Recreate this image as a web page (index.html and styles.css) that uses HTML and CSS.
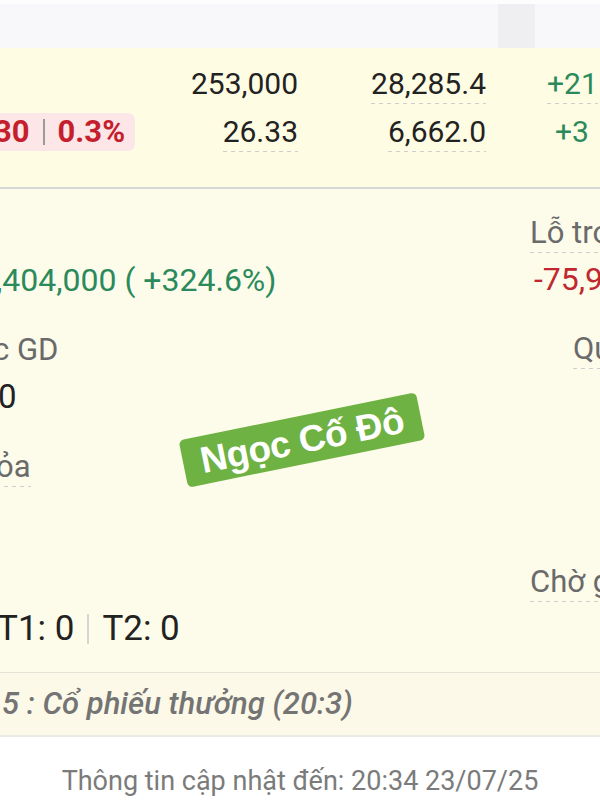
FILE: index.html
```html
<!DOCTYPE html>
<html lang="vi">
<head>
    <meta charset="UTF-8">
    <title>Chi tiết mã</title>
    <link rel="stylesheet" href="styles.css">
</head>
<body>
<div id="page">
    <div id="topbar">
        <div class="strip"></div>
    </div>

    <div id="quote">
        <div class="cell"></div>
        <div class="cell num">253,000</div>
        <div class="cell num"><span class="dash">28,285.4</span></div>
        <div class="cell up"><span class="dash">+21</span></div>

        <div class="cell">
            <span class="badge"><span>30</span><i class="sep"></i><span>0.3%</span></span>
        </div>
        <div class="cell num"><span class="dash">26.33</span></div>
        <div class="cell num"><span class="dash">6,662.0</span></div>
        <div class="cell up second">+3</div>
    </div>

    <div id="detail">
        <div class="col-left">
            <div class="value green first">,404,000 ( +324.6%)</div>
            <div class="label gd">c GD</div>
            <div class="value zero">0</div>
            <div class="label hoa"><span class="dash">ỏa</span></div>
            <div class="value t12">T1: 0<i class="sep light"></i>T2: 0</div>
        </div>
        <div class="col-right">
            <div class="label lo"><span class="dash">Lỗ tro</span></div>
            <div class="value red">-75,9</div>
            <div class="label qu"><span class="dash">Qu</span></div>
            <div class="label cho"><span class="dash">Chờ g</span></div>
        </div>
        <div class="stamp">Ngọc Cố Đô</div>
    </div>

    <div id="note">5 : Cổ phiếu thưởng (20:3)</div>

    <div id="footer">Thông tin cập nhật đến: 20:34 23/07/25</div>
</div>
</body>
</html>
```

FILE: styles.css
```css
*{
    margin: 0;
    padding: 0;
    box-sizing: border-box;
}

body{
    width: 600px;
    height: 800px;
    overflow: hidden;
    background: #fff;
    font-family: Roboto, "Noto Sans", "Liberation Sans", sans-serif;
    color: #222;
}

#page{
    width: 600px;
}

/* thanh trên cùng */
#topbar{
    height: 48px;
    background: #f8f8fa;
    border-top: 4px solid #fdfdfe;
    display: flex;
}
#topbar .strip{
    width: 37px;
    margin-left: 498px;
    background: #efeff2;
}

/* khối giá */
#quote{
    height: 139px;
    background: #fffce4;
    padding-top: 18px;
    display: grid;
    grid-template-columns: 134px 164px 188px 1fr;
    grid-auto-rows: 39px;
    row-gap: 9px;
    font-size: 30px;
}
#quote .cell{
    line-height: 36px;
    white-space: nowrap;
}
#quote .num{
    text-align: right;
}
#quote .up{
    color: #2b8a5c;
    padding-left: 61px;
}
#quote .up.second{
    padding-left: 69px;
}

.dash{
    display: inline-block;
    padding-bottom: 2px;
    background-image: linear-gradient(to right, #cfcfcf 55%, transparent 0);
    background-size: 8px 1px;
    background-repeat: repeat-x;
    background-position: left bottom;
}

.badge{
    display: inline-flex;
    align-items: center;
    height: 38px;
    margin-top: -1px;
    margin-left: -16px;
    padding: 0 10px;
    background: #fde6e8;
    border-radius: 7px;
    color: #c51f2d;
    font-weight: bold;
    font-size: 31px;
}
.sep{
    display: inline-block;
    width: 2px;
    height: 26px;
    margin: 0 13px;
    background: #9b9b9b;
}

/* chi tiết */
#detail{
    position: relative;
    height: 485px;
    background: #fdfbe9;
    border-top: 2px solid #d8d8d6;
    display: flex;
    font-size: 31px;
}
.col-left{
    flex: 1;
    white-space: nowrap;
}
.col-right{
    width: 70px;
    white-space: nowrap;
}
.label{
    line-height: 36px;
    color: #6a6a6a;
}
.value{
    line-height: 40px;
}
.green{
    color: #2b8a5c;
    font-size: 32px;
}
.red{
    color: #c0272f;
}

.first{ margin-top: 71px; margin-left: -4px; }
.gd{ margin-top: 32px; margin-left: -7px; }
.zero{ margin-top: 9px; margin-left: -2px; font-size: 33px; }
.hoa{ margin-top: 32px; margin-left: -4px; }
.t12{ margin-top: 122px; margin-left: -3px; display: flex; align-items: center; font-size: 35px; }
.sep.light{
    height: 30px;
    margin: 0 13px;
    background: #d6d6d0;
}

.lo{ margin-top: 26px; }
.red{ margin-top: 6px; margin-left: 4px; font-size: 32px; }
.qu{ margin-top: 32px; margin-left: 43px; }
.cho{ margin-top: 195px; }

/* con dấu */
.stamp{
    position: absolute;
    left: 181px;
    top: 227px;
    width: 242px;
    height: 48px;
    background: #6fb244;
    border-radius: 5px;
    transform: rotate(-11.5deg);
    color: #fff;
    font-family: "Liberation Sans", Arial, sans-serif;
    font-weight: bold;
    font-size: 37px;
    line-height: 50px;
    text-align: center;
    letter-spacing: -0.5px;
}

#note{
    height: 65px;
    background: #fcf9e8;
    border-top: 1px solid #e5e3d8;
    border-bottom: 2px solid #ebebe6;
    line-height: 62px;
    font-size: 31px;
    font-style: italic;
    font-weight: 500;
    color: #747474;
    padding-left: 2px;
}

#footer{
    text-align: center;
    padding-top: 28px;
    font-size: 27px;
    color: #7b7b7b;
}
```
